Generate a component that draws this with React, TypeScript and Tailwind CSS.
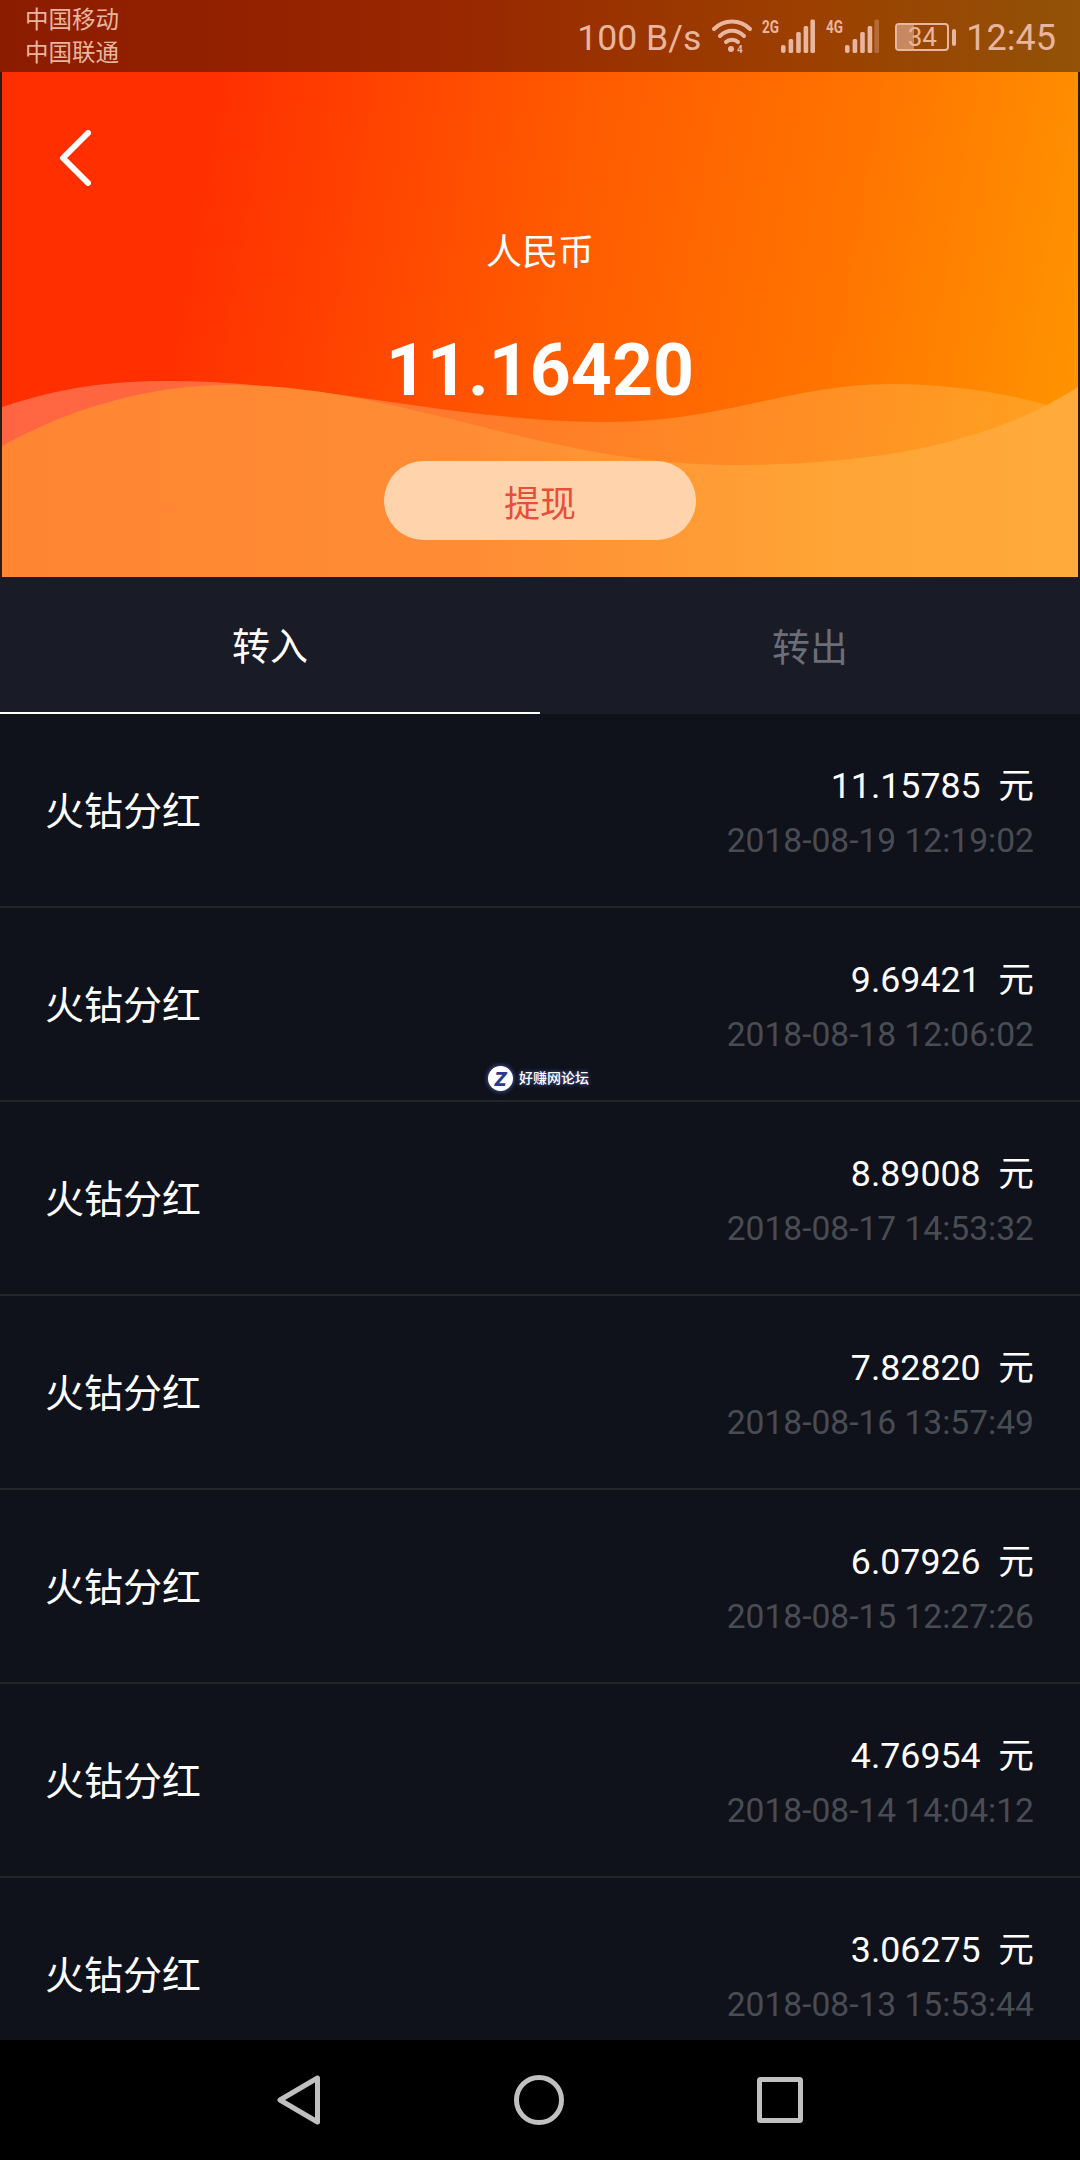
const rows = [
  ["11.15785", "2018-08-19 12:19:02"],
  ["9.69421", "2018-08-18 12:06:02"],
  ["8.89008", "2018-08-17 14:53:32"],
  ["7.82820", "2018-08-16 13:57:49"],
  ["6.07926", "2018-08-15 12:27:26"],
  ["4.76954", "2018-08-14 14:04:12"],
  ["3.06275", "2018-08-13 15:53:44"],
];

function Signal({ label, dim }: { label: string; dim?: boolean }) {
  const c = "#e8b59e";
  return (
    <svg width="53" height="36" viewBox="0 0 53 36" className="block overflow-visible">
      <text x="0" y="15" fontSize="18" fontWeight="700" fill={c} fontFamily="Roboto, sans-serif" textLength="17" lengthAdjust="spacingAndGlyphs">{label}</text>
      <rect x="19" y="27" width="4.6" height="8" rx="2" fill={c} />
      <rect x="26.6" y="21" width="4.6" height="14" rx="1.5" fill={c} />
      <rect x="34.2" y="14" width="4.6" height="21" rx="1.5" fill={c} />
      <rect x="41.6" y="8" width="4.6" height="27" rx="1.5" fill={c} />
      <rect x="48.4" y="1.5" width="4.6" height="33.5" rx="1.5" fill={c} opacity={dim ? 0.35 : 1} />
    </svg>
  );
}

export default function App() {
  return (
    <div className="relative w-[1080px] h-[2160px] flex flex-col overflow-hidden bg-[#0f121b] [font-family:Roboto,'Noto_Sans_CJK_SC',sans-serif]">
      {/* Status bar */}
      <div className="h-[72px] shrink-0 flex items-center justify-between pl-[25px] pr-[24px] bg-[linear-gradient(90deg,#8c1c00,#982600_40%,#9c4000_75%,#925208)] text-[#e8b59e]">
        <div className="flex flex-col text-[23.5px] leading-[33px] pt-[2px]">
          <span>中国移动</span>
          <span>中国联通</span>
        </div>
        <div className="flex items-center">
          <span className="text-[35.6px] leading-[40px] mt-[4px] mr-[11px] whitespace-nowrap">100 B/s</span>
          <svg width="40" height="34" viewBox="0 0 40 34" fill="none" stroke="#e8b59e" strokeWidth="4" strokeLinecap="round" className="mr-[10px] overflow-visible">
            <path d="M2 10 C12 0 28 0 38 10" />
            <path d="M8 17 C15 10 25 10 32 17" />
            <path d="M14 23 C17 20 23 20 26 23" />
            <circle cx="19" cy="30" r="3" fill="#e8b59e" stroke="none" />
            <text x="25" y="34" fontSize="10" fontWeight="700" fill="#e8b59e" stroke="none" fontFamily="Roboto, sans-serif">4</text>
          </svg>
          <Signal label="2G" />
          <div className="ml-[11px]">
            <Signal label="4G" dim />
          </div>
          <div className="relative ml-[16px] w-[54px] h-[28px] mt-[2px] rounded-[4px] border-2 border-[#e8b59e] flex items-center justify-center overflow-hidden">
            <div className="absolute left-0 top-0 bottom-0 w-[34%] bg-[#e8b59e] opacity-60" />
            <span className="relative text-[26px] leading-[26px]">34</span>
          </div>
          <div className="ml-[3px] mr-[10px] mt-[2px] w-[4px] h-[17px] rounded-[2px] bg-[#e8b59e]" />
          <span className="text-[36px] leading-[40px] mt-[4px]">12:45</span>
        </div>
      </div>

      {/* Header */}
      <div className="shrink-0 h-[506px] bg-[#2a1c14] px-[2px] pb-[1px]">
        <div className="relative h-full overflow-hidden bg-[linear-gradient(100deg,#ff2f00_18%,#ff5a00_50%,#ff7400_75%,#ff9800_100%)] flex flex-col items-center">
          <svg viewBox="0 0 1076 505" width="1076" height="505" className="absolute inset-0">
            <defs>
              <linearGradient id="b" x1="0" y1="0" x2="1" y2="0">
                <stop offset="0" stopColor="#ffffff" stopOpacity="0.26" />
                <stop offset="0.5" stopColor="#ffb060" stopOpacity="0.4" />
                <stop offset="1" stopColor="#ffb040" stopOpacity="0.5" />
              </linearGradient>
              <linearGradient id="f" x1="0" y1="0.5" x2="1" y2="0.5">
                <stop offset="0" stopColor="#ff8532" />
                <stop offset="0.45" stopColor="#ff8d35" />
                <stop offset="0.75" stopColor="#ffa335" />
                <stop offset="1" stopColor="#ffab3c" />
              </linearGradient>
            </defs>
            <path d="M0 335 C60 315 110 309 165 309 C320 309 450 350 606 350 C720 350 790 312 888 312 C960 312 1030 325 1076 344 V505 H0Z" fill="url(#b)" />
            <path d="M0 374 C70 335 150 313 227 313 C400 313 540 393 730 393 C880 393 990 370 1076 315 V505 H0Z" fill="url(#f)" />
          </svg>
          <div className="relative self-start ml-[57px] mt-[58px] h-[56px]">
            <svg width="32" height="56" viewBox="0 0 32 56" fill="none" stroke="#ffffff" strokeWidth="6" strokeLinecap="round" strokeLinejoin="round" className="block">
              <path d="M29 3 L4 28 L29 53" />
            </svg>
          </div>
          <div className="relative mt-[47px] text-[36px] leading-[40px] text-white">人民币</div>
          <div className="relative mt-[58px] text-[71.5px] leading-[80px] font-bold text-white">11.16420</div>
          <div className="relative mt-[50px] w-[312px] h-[79px] rounded-full bg-[#ffd4ad] flex items-center justify-center pt-[8px] text-[36px] text-[#e4503a]">提现</div>
        </div>
      </div>

      {/* Tabs */}
      <div className="shrink-0 h-[136px] flex bg-[#191c27] text-[38px]">
        <div className="flex-1 flex items-center justify-center pt-[5px] text-white border-b-2 border-white">转入</div>
        <div className="flex-1 flex items-center justify-center pt-[5px] text-[#6b6e77]">转出</div>
      </div>

      {/* List */}
      <div className="flex-1 min-h-0 overflow-hidden">
        {rows.map(([amount, date]) => (
          <div key={date} className="h-[194px] flex items-center justify-between pl-[45px] pr-[46px] border-b-2 border-[#24262e]">
            <span className="text-[39px] pt-[5px] text-white">火钻分红</span>
            <div className="flex flex-col items-end pt-[6px]">
              <div className="text-[35.7px] leading-[44px] text-white whitespace-pre">{amount}  元</div>
              <div className="mt-[11px] text-[33.6px] leading-[44px] text-[#4a4c53]">{date}</div>
            </div>
          </div>
        ))}
      </div>

      {/* Nav bar */}
      <div className="shrink-0 h-[120px] bg-black flex items-center justify-center gap-[193px]">
        <svg width="44" height="50" viewBox="0 0 44 50" fill="none" stroke="#c0c0c0" strokeWidth="5" strokeLinejoin="round">
          <path d="M40.5 3 V47 L3 25 Z" />
        </svg>
        <svg width="50" height="50" viewBox="0 0 50 50" fill="none" stroke="#c0c0c0" strokeWidth="5">
          <circle cx="25" cy="25" r="22.5" />
        </svg>
        <svg width="46" height="46" viewBox="0 0 46 46" fill="none" stroke="#c0c0c0" strokeWidth="5" strokeLinejoin="round">
          <rect x="2.5" y="2.5" width="41" height="41" rx="1" />
        </svg>
      </div>

      {/* Watermark */}
      <div className="absolute left-[488px] top-[1066px] flex items-center gap-[6px]">
        <div className="w-[25px] h-[25px] rounded-full bg-white flex items-center justify-center text-[20px] leading-none font-black italic text-[#2b3a8c] shadow-[0_0_5px_#5b6bd0]">Z</div>
        <span className="text-[14px] leading-[25px] font-medium text-white [text-shadow:0_0_4px_#5b6bd0]">好赚网论坛</span>
      </div>
    </div>
  );
}
